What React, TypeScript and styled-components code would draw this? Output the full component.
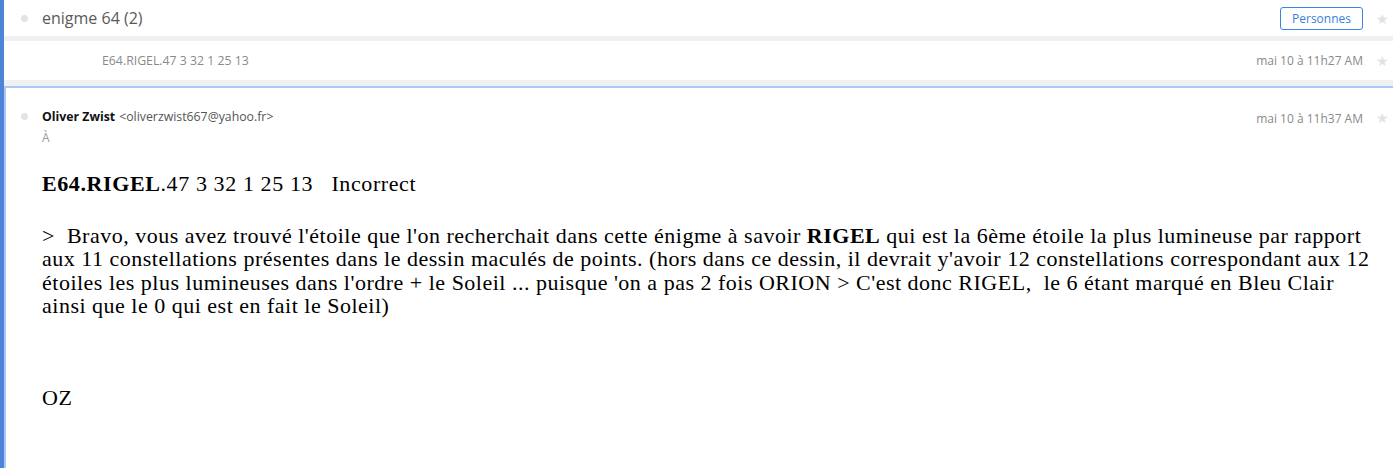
import React from "react";
import { styled, createGlobalStyle } from "styled-components";

const GlobalStyle = createGlobalStyle`
  html, body {
    margin: 0;
    padding: 0;
    background: #fff;
  }
  body {
    font-family: "Open Sans", "Noto Sans", sans-serif;
  }
`;

const Thread = styled.div`
  display: flex;
  flex-direction: column;
  height: 468px;
  border-left: 4px solid #4d83d9;
  box-sizing: border-box;
  overflow: hidden;
`;

const HeaderRow = styled.div`
  display: flex;
  align-items: center;
  height: 36px;
  padding: 0 4px 0 17px;
`;

const Dot = styled.span`
  width: 7px;
  height: 7px;
  border-radius: 50%;
  background: #e3e3e6;
  flex-shrink: 0;
`;

const Title = styled.div`
  margin-left: 14px;
  font-size: 16px;
  color: #5a5a5a;
  flex: 1;
`;

const PeopleButton = styled.button`
  height: 23px;
  margin-right: 4px;
  padding: 0 11px;
  border: 1px solid #3a84e6;
  border-radius: 3px;
  background: #fff;
  color: #3a7fd9;
  font-family: "Open Sans", sans-serif;
  font-size: 12px;
  cursor: pointer;
`;

const Star = styled.span<{ $top?: number }>`
  width: 22px;
  text-align: right;
  font-size: 14px;
  color: #e2e2e4;
  flex-shrink: 0;
  align-self: ${(p) => (p.$top !== undefined ? "flex-start" : "center")};
  margin-top: ${(p) => (p.$top !== undefined ? `${p.$top}px` : "0")};
`;

const Separator = styled.div<{ $h: number }>`
  height: ${(p) => p.$h}px;
  background: #f0f0f3;
  flex-shrink: 0;
`;

const CollapsedRow = styled.div`
  display: flex;
  align-items: center;
  height: 39px;
  padding: 0 4px 0 98px;
  flex-shrink: 0;
`;

const Snippet = styled.div`
  flex: 1;
  font-size: 12.3px;
  color: #8a8a8a;
`;

const DateText = styled.div<{ $top?: number }>`
  font-size: 12px;
  color: #8a8a8a;
  margin-right: 4px;
  margin-top: ${(p) => p.$top ?? 0}px;
`;

const Card = styled.div`
  flex: 1;
  border-top: 2px solid #aac9f7;
  border-left: 2px solid #aac9f7;
  padding: 19px 4px 0 15px;
`;

const SenderRow = styled.div`
  display: flex;
  align-items: flex-start;
`;

const SenderDot = styled(Dot)`
  margin-top: 6px;
`;

const SenderBlock = styled.div`
  flex: 1;
  margin-left: 14px;
`;

const SenderLine = styled.div`
  font-size: 12.3px;
  color: #555;
  line-height: 20px;
`;

const SenderName = styled.span`
  font-weight: 700;
  color: #111;
  margin-right: 4px;
`;

const ToLine = styled.div`
  font-size: 12px;
  color: #9a9a9a;
  line-height: 22px;
`;

const Body = styled.div`
  margin: 21px 14px 0 21px;
  font-family: "Liberation Serif", "Times New Roman", serif;
  color: #000;
`;

const Heading = styled.div`
  font-size: 22px;
  line-height: 28px;
  letter-spacing: 0.6px;
  margin-bottom: 26px;
  white-space: pre;
`;

const Para = styled.div`
  font-size: 22px;
  line-height: 23.3px;
  letter-spacing: 0.5px;
`;

const Blank = styled.div`
  height: 22.9px;
`;

export default function App() {
  return (
    <>
      <GlobalStyle />
      <Thread>
        <HeaderRow>
          <Dot />
          <Title>enigme 64 (2)</Title>
          <PeopleButton>Personnes</PeopleButton>
          <Star>★</Star>
        </HeaderRow>
        <Separator $h={5} />
        <CollapsedRow>
          <Snippet>E64.RIGEL.47 3 32 1 25 13</Snippet>
          <DateText>mai 10 à 11h27 AM</DateText>
          <Star>★</Star>
        </CollapsedRow>
        <Separator $h={6} />
        <Card>
          <SenderRow>
            <SenderDot />
            <SenderBlock>
              <SenderLine>
                <SenderName>Oliver Zwist</SenderName>
                &lt;oliverzwist667@yahoo.fr&gt;
              </SenderLine>
              <ToLine>À</ToLine>
            </SenderBlock>
            <DateText $top={3}>mai 10 à 11h37 AM</DateText>
            <Star $top={1}>★</Star>
          </SenderRow>
          <Body>
            <Heading>
              <b>E64.RIGEL</b>.47 3 32 1 25 13{"   "}Incorrect
            </Heading>
            <Para>
              &gt;&nbsp; Bravo, vous avez trouvé l'étoile que l'on recherchait dans cette énigme à savoir{" "}
              <b>RIGEL</b> qui est la 6ème étoile la plus lumineuse par rapport aux 11 constellations
              présentes dans le dessin maculés de points. (hors dans ce dessin, il devrait y'avoir 12
              constellations correspondant aux 12 étoiles les plus lumineuses dans l'ordre + le Soleil
              ... puisque 'on a pas 2 fois ORION &gt; C'est donc RIGEL,&nbsp; le 6 étant marqué en Bleu
              Clair ainsi que le 0 qui est en fait le Soleil)
            </Para>
            <Blank />
            <Blank />
            <Blank />
            <Para>OZ</Para>
          </Body>
        </Card>
      </Thread>
    </>
  );
}
